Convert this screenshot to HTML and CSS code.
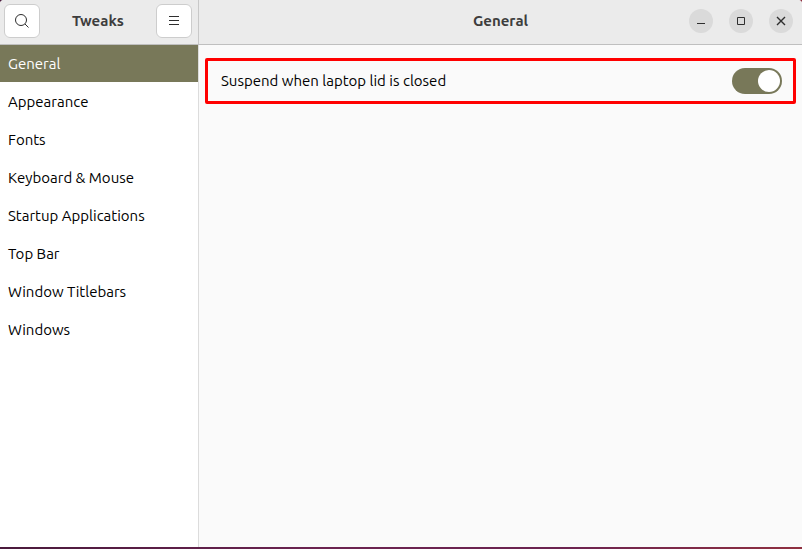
FILE: index.html
```
<!DOCTYPE html>
<html lang="en">

<head>
    <meta charset="UTF-8">
    <meta name="viewport" content="width=device-width, initial-scale=1.0">
    <title>Tweaks</title>
    <link rel="stylesheet" href="styles.css">
</head>

<body>
    <div class="window">
        <header class="headerbar">
            <div class="header-left">
                <button class="tool" type="button" aria-label="Search">
                    <svg width="16" height="16" viewBox="0 0 16 16">
                        <circle cx="7" cy="7" r="5.5" />
                        <path d="M11 11l3.5 3.5" />
                    </svg>
                </button>
                <h1 class="title">Tweaks</h1>
                <button class="tool" type="button" aria-label="Menu">
                    <svg width="16" height="16" viewBox="0 0 16 16">
                        <path d="M3 3.5h10M3 7.5h10M3 11.5h10" />
                    </svg>
                </button>
            </div>
            <div class="header-right">
                <h2 class="title">General</h2>
                <div class="controls">
                    <button class="control" type="button" aria-label="Minimize">
                        <svg width="16" height="16" viewBox="0 0 16 16">
                            <path d="M4 10.5h8" />
                        </svg>
                    </button>
                    <button class="control" type="button" aria-label="Maximize">
                        <svg width="16" height="16" viewBox="0 0 16 16">
                            <path d="M4.5 4.5h7v7h-7z" />
                        </svg>
                    </button>
                    <button class="control" type="button" aria-label="Close">
                        <svg width="16" height="16" viewBox="0 0 16 16">
                            <path stroke-width="1.4" d="M4 4l8 8M12 4l-8 8" />
                        </svg>
                    </button>
                </div>
            </div>
        </header>

        <div class="content">
            <nav class="sidebar">
                <a class="active" href="#general">General</a>
                <a href="#appearance">Appearance</a>
                <a href="#fonts">Fonts</a>
                <a href="#keyboard">Keyboard &amp; Mouse</a>
                <a href="#startup">Startup Applications</a>
                <a href="#topbar">Top Bar</a>
                <a href="#titlebars">Window Titlebars</a>
                <a href="#windows">Windows</a>
            </nav>
            <main class="panel" id="general">
                <div class="setting">
                    <label for="suspend">Suspend when laptop lid is closed</label>
                    <input class="switch" type="checkbox" role="switch" id="suspend" checked>
                </div>
            </main>
        </div>
    </div>
</body>

</html>
```

FILE: styles.css
```
* {
    box-sizing: border-box;
    margin: 0;
    padding: 0;
}

body {
    height: 100vh;
    padding-bottom: 2px;
    background: linear-gradient(to right, #4a1a3c, #6b2350 40%, #6b2350 70%, #8f3040);
    font-family: Ubuntu, "Noto Sans", sans-serif;
    font-size: 15px;
    line-height: 20px;
    color: #000;
}

.window {
    display: flex;
    flex-direction: column;
    height: 100%;
    border-radius: 4px 4px 0 0;
    overflow: hidden;
    background: #fafafa;
}

/* Header bar */
.headerbar {
    display: flex;
    position: relative;
    z-index: 1;
    height: 45px;
    background: #ebebeb;
    border-bottom: 1px solid #bfbfbf;
}

.header-left {
    display: flex;
    align-items: center;
    justify-content: space-between;
    width: 199px;
    padding: 0 6px 2px 4px;
    border-right: 1px solid #c8c8c8;
}

.header-right {
    display: grid;
    grid-template-columns: 1fr auto 1fr;
    align-items: center;
    flex: 1;
    padding: 0 9px 2px;
}

.header-right .title {
    grid-column: 2;
}

.title {
    font-size: 15px;
    font-weight: bold;
    color: #3d3d3d;
}

.tool {
    display: flex;
    align-items: center;
    justify-content: center;
    width: 36px;
    height: 34px;
    background: #fff;
    border: 1px solid #cdcdcd;
    border-radius: 6px;
}

.controls {
    display: flex;
    justify-content: flex-end;
    gap: 16px;
}

.control {
    display: flex;
    align-items: center;
    justify-content: center;
    width: 24px;
    height: 24px;
    background: #dadada;
    border: none;
    border-radius: 50%;
}

svg {
    fill: none;
    stroke: #2e2e2e;
    stroke-width: 1;
}

/* Page list and settings */
.content {
    display: flex;
    flex: 1;
}

.sidebar {
    width: 199px;
    margin-top: -1px;
    background: #fff;
    border-right: 1px solid #dcdcdc;
}

.sidebar a {
    display: block;
    padding: 10px 8px 8px;
    color: #000;
    text-decoration: none;
}

.sidebar .active {
    background: #787859;
    color: #fff;
}

.panel {
    flex: 1;
    padding: 13px 6px;
}

.setting {
    display: flex;
    align-items: center;
    justify-content: space-between;
    height: 46px;
    padding: 0 11px 0 13px;
    border: 3px solid #f00;
    border-radius: 2px;
}

.switch {
    appearance: none;
    width: 50px;
    height: 26px;
    padding: 2px;
    background: #787859;
    border-radius: 13px;
}

.switch::before {
    content: "";
    display: block;
    width: 22px;
    height: 22px;
    background: #fff;
    border-radius: 50%;
}

.switch:checked::before {
    margin-left: auto;
}
```
